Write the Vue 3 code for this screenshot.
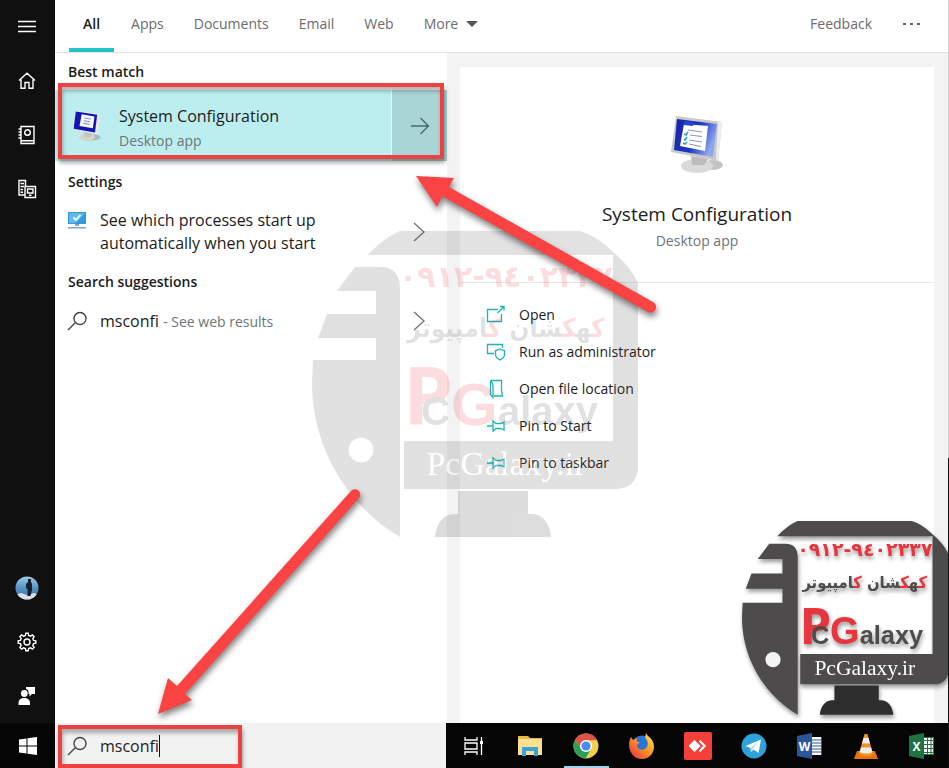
<script setup>
import { ref } from 'vue'

const query = ref('msconfi')
const activeTab = ref('All')

const tabs = ['All', 'Apps', 'Documents', 'Email', 'Web', 'More']

const actions = [
  { label: 'Open', icon: 'open' },
  { label: 'Run as administrator', icon: 'admin' },
  { label: 'Open file location', icon: 'folder' },
  { label: 'Pin to Start', icon: 'pin' },
  { label: 'Pin to taskbar', icon: 'pin' }
]

const marks = ['faded', 'solid']
</script>

<template>
  <div class="desktop">
    <div class="search-window">
      <nav class="rail">
        <button class="rail-button" aria-label="Menu">
          <svg width="20" height="20" viewBox="0 0 20 20">
            <path d="M1 4.5H19M1 9.5H19M1 14.5H19" />
          </svg>
        </button>
        <button class="rail-button" aria-label="Home">
          <svg width="20" height="20" viewBox="0 0 20 20">
            <path d="M2 9.6 10 2.2 18 9.6M4 8.5V17.3H8V11.5H12V17.3H16V8.5" />
          </svg>
        </button>
        <button class="rail-button" aria-label="Notebook">
          <svg width="20" height="20" viewBox="0 0 20 20">
            <path d="M4 1.5H17V18.5H4ZM4 15.8H17M1.5 4H4.5M1.5 7H4.5M1.5 10H4.5M1.5 13H4.5" />
            <circle cx="10.5" cy="7.5" r="2.8" />
          </svg>
        </button>
        <button class="rail-button" aria-label="Devices">
          <svg width="20" height="20" viewBox="0 0 20 20">
            <path d="M7.5 16H2V1.5H8.5V7M3.5 4.5H7M3.5 7.5H7M3.5 10.5H6M3.5 13.2H6M8 7.5H18.5V18.5H8ZM10.5 10H16V14H10.5ZM12 16.3H14.5" />
          </svg>
        </button>
        <span class="rail-space" />
        <button class="rail-button" aria-label="Account">
          <svg class="plain" width="24" height="24" viewBox="0 0 24 24">
            <defs>
              <linearGradient id="sky" x2="0" y2="1">
                <stop offset="0" stop-color="#9fd0ee" />
                <stop offset=".5" stop-color="#5592c4" />
                <stop offset="1" stop-color="#3c6d9c" />
              </linearGradient>
              <clipPath id="face"><circle cx="12" cy="12" r="11.5" /></clipPath>
            </defs>
            <g clip-path="url(#face)">
              <path fill="url(#sky)" d="M0 0H24V24H0Z" />
              <path fill="#d9dfe3" d="M0 19 6 17 12 19 19 17 24 19V24H0Z" />
              <path fill="#16202f" d="M13 3H16V6L17 8V14L15.5 20H12.5V13L11 12V8L13 6Z" />
            </g>
          </svg>
        </button>
        <button class="rail-button" aria-label="Settings">
          <svg width="20" height="20" viewBox="0 0 20 20">
            <path d="M8.4 3.4 8.8 1.2H11.2L11.6 3.4 13.5 4.2 15.4 2.9 17.1 4.6 15.8 6.5 16.6 8.4 18.8 8.8V11.2L16.6 11.6 15.8 13.5 17.1 15.4 15.4 17.1 13.5 15.8 11.6 16.6 11.2 18.8H8.8L8.4 16.6 6.5 15.8 4.6 17.1 2.9 15.4 4.2 13.5 3.4 11.6 1.2 11.2V8.8L3.4 8.4 4.2 6.5 2.9 4.6 4.6 2.9 6.5 4.2Z" />
            <circle cx="10" cy="10" r="3" />
          </svg>
        </button>
        <button class="rail-button" aria-label="Give feedback">
          <svg class="plain" width="20" height="20" viewBox="0 0 20 20">
            <path fill="#fff" d="M9 1H18V8H15L12.5 10.5V8H11.5C12 5 11 3.5 9 3Z" />
            <circle cx="7.3" cy="7.5" r="3.4" fill="#fff" />
            <path fill="#fff" d="M1.5 19V17C1.5 13.5 4 12 7.2 12S13 13.5 13 17V19Z" />
          </svg>
        </button>
      </nav>

      <div class="content">
        <header class="tabs">
          <button
            v-for="tab in tabs"
            :key="tab"
            class="tab"
            :class="{ active: tab === activeTab }"
            @click="activeTab = tab">
            {{ tab }}
            <svg v-if="tab === 'More'" width="12" height="6" viewBox="0 0 12 6">
              <path fill="#555" d="M0 0H12L6 6Z" />
            </svg>
          </button>
          <span class="tabs-space" />
          <button class="tab">Feedback</button>
          <button class="tab more" aria-label="Options">
            <svg width="18" height="4" viewBox="0 0 18 4">
              <path fill="#666" d="M0 1H3V3H0ZM7 1H10V3H7ZM14 1H17V3H14Z" />
            </svg>
          </button>
        </header>

        <main class="columns">
          <section class="results">
            <h2 class="group first">Best match</h2>
            <div class="best">
              <button class="best-main">
                <svg class="best-icon" width="30" height="32" viewBox="0 0 54 60">
                  <ellipse cx="36" cy="51" rx="16" ry="6" fill="#a9b8b8" />
                  <ellipse cx="27" cy="51" rx="15" ry="7" fill="#d7d3c8" />
                  <path fill="#c5c5c5" d="M20 40H37L34 51H22Z" />
                  <path fill="#e4e6ea" d="M6 1 52 8 48 46 1 37Z" />
                  <path fill="#1414b4" d="M6 3 46 9 42 42 2 35Z" />
                  <path fill="#f5f8ff" d="M17 8 41 12 38 34 13 30Z" />
                  <path fill="none" stroke="#8a9bb8" stroke-width="2" d="M22 15 34 17M21 20 33 22M20 25 32 27" />
                </svg>
                <span class="best-text">
                  <span class="best-title">System Configuration</span>
                  <span class="muted">Desktop app</span>
                </span>
              </button>
              <button class="best-open" aria-label="Show details">
                <svg width="20" height="18" viewBox="0 0 20 18">
                  <path fill="none" stroke="#45696c" stroke-width="1.3" d="M1 9H18.5M10.5 1 18.5 9 10.5 17" />
                </svg>
              </button>
            </div>

            <h2 class="group">Settings</h2>
            <button class="row tall">
              <svg class="row-icon" width="20" height="20" viewBox="0 0 20 20">
                <path fill="#3398dc" d="M1 2H19V14H1Z" />
                <path fill="#62b9ef" d="M2 3H18L9 13H2Z" />
                <path fill="none" stroke="#fff" stroke-width="1.8" d="M6.5 7.5 9 10 13.5 5" />
                <path fill="#7ba8c4" d="M8 14H12V16H8ZM1 17H19V18.5H1Z" />
              </svg>
              <span class="row-text">See which processes start up automatically when you start</span>
              <svg class="chevron" width="12" height="20" viewBox="0 0 12 20">
                <path d="M1 1 11 10 1 19" />
              </svg>
            </button>

            <h2 class="group">Search suggestions</h2>
            <button class="row">
              <svg class="row-icon" width="20" height="20" viewBox="0 0 20 20">
                <path class="glass" d="M1 19 8 12M13 13.5A6 6 0 1 0 13 1.5 6 6 0 0 0 13 13.5Z" />
              </svg>
              <span class="row-text">msconfi <span class="muted">- See web results</span></span>
              <svg class="chevron" width="12" height="20" viewBox="0 0 12 20">
                <path d="M1 1 11 10 1 19" />
              </svg>
            </button>
          </section>

          <section class="preview">
            <div class="card">
              <div class="summary">
                <svg width="54" height="60" viewBox="0 0 54 60">
                  <defs>
                    <linearGradient id="screen" y2=".4">
                      <stop offset="0" stop-color="#1420a8" />
                      <stop offset=".6" stop-color="#2038c8" />
                      <stop offset="1" stop-color="#8ea8ee" />
                    </linearGradient>
                  </defs>
                  <ellipse cx="43" cy="50" rx="10" ry="5" fill="#c4c4c4" />
                  <ellipse cx="27" cy="51" rx="16" ry="7" fill="#dadada" />
                  <path fill="#bcbcbc" d="M21 41 38 44 34 50H22Z" />
                  <path fill="#c9c9c9" d="M6 1 52 7 48 46 1 37Z" />
                  <path fill="#ededed" d="M48 7 52 7 48 46 46 44Z" />
                  <path fill="url(#screen)" d="M7 4 47 9 43 42 4 35Z" />
                  <path fill="#fff" d="M14 9 38 11 35 36 10 31Z" />
                  <path fill="#2840d0" d="M14 6 24 7 23 11 14 10Z" />
                  <path fill="none" stroke="#8d99b0" stroke-width="1" d="M18 15 32 17M20 20 32 21.5M19 25 32 27M19 29 31 31.5" />
                  <path fill="none" stroke="#2c9cc4" stroke-width="1.5" d="M14 19 16 20 18 17M14 24 15 25 17 22M13 28 15 29 17 27" />
                </svg>
                <h1 class="title">System Configuration</h1>
                <span class="muted">Desktop app</span>
              </div>
              <div class="actions">
                <button v-for="action in actions" :key="action.label" class="action">
                  <svg width="20" height="20" viewBox="0 0 20 20">
                    <path v-if="action.icon === 'open'" d="M12 4.5H1.5V16.5H15.5V9M11.5 8 18 1.5M14 1.5H18V5.5" />
                    <path v-else-if="action.icon === 'admin'" d="M8 11.5H1.5V2.5H16.5V6M14 7 18.5 8.8V12.5C18.5 15.5 16 17 14 18 12 17 9.5 15.5 9.5 12.5V8.8Z" />
                    <path v-else-if="action.icon === 'folder'" d="M4.5 1.5H15.5V11L16.5 17H8M4.5 1.5V16L7 18.5V7C7 4.5 5.5 3.5 4.5 1.5Z" />
                    <path v-else d="M1 10H7M7 5V15L10 12.5H15L18 14V6L15 7.5H10Z" />
                  </svg>
                  {{ action.label }}
                </button>
              </div>
            </div>
          </section>
        </main>
      </div>
    </div>

    <footer class="taskbar">
      <button class="start" aria-label="Start">
        <svg width="20" height="20" viewBox="0 0 20 20">
          <path fill="#fff" d="M1 3.5 8.5 2.4V9.4H1ZM9.5 2.2 19 1V9.4H9.5ZM1 10.5H8.5V17.6L1 16.5ZM9.5 10.5H19V19L9.5 17.8Z" />
        </svg>
      </button>
      <label class="search-box">
        <svg class="row-icon" width="20" height="20" viewBox="0 0 20 20">
          <path class="glass" d="M1 19 8 12M13 13.5A6 6 0 1 0 13 1.5 6 6 0 0 0 13 13.5Z" />
        </svg>
        <input v-model="query" type="text" aria-label="Search">
        <span class="caret" />
      </label>
      <div class="apps">
        <button class="app" aria-label="Task View">
          <svg width="22" height="20" viewBox="0 0 22 20">
            <path fill="none" stroke="#fff" stroke-width="1.3" d="M2 1V4H14V1M2 19V16H14V19M2 7H14V13H2ZM18.5 1V19" />
            <path fill="#fff" d="M17 5H20V8H17Z" />
          </svg>
        </button>
        <button class="app" aria-label="File Explorer">
          <svg width="26" height="26" viewBox="0 0 26 26">
            <path fill="#e9b949" d="M1 3H11L13 5H25V22H1Z" />
            <path fill="#fae08f" d="M1 6H25V22H1Z" />
            <path fill="#38a4d8" d="M5 14H21V23H17V18H9V23H5Z" />
          </svg>
        </button>
        <button class="app running" aria-label="Chrome">
          <svg width="26" height="26" viewBox="0 0 26 26">
            <circle cx="13" cy="13" r="12.5" fill="#f6cf4a" />
            <path fill="#dc5445" d="M2.2 6.7A12.5 12.5 0 0 1 24 7.2H13L7.8 16Z" />
            <path fill="#2c9f5b" d="M2.2 6.7A12.5 12.5 0 0 0 12.5 25.5L18.2 15.8 7.8 16Z" />
            <circle cx="13" cy="13" r="6" fill="#fff" />
            <circle cx="13" cy="13" r="4.6" fill="#4b8bf0" />
          </svg>
        </button>
        <button class="app" aria-label="Firefox">
          <svg width="28" height="28" viewBox="0 0 28 28">
            <defs>
              <linearGradient id="fox" x1="1" x2="0" y2="1">
                <stop offset="0" stop-color="#fff04a" />
                <stop offset=".45" stop-color="#ff9a22" />
                <stop offset="1" stop-color="#e8264c" />
              </linearGradient>
            </defs>
            <circle cx="14" cy="14" r="10.5" fill="#2a73d8" />
            <path fill="url(#fox)" d="M3 5 5 8 9 6C8 9 9 10 12 10L9 13C9 18 15 19 18 16 21 13 20 8 17 6L18 1C19 4 22 5 24 8 29 16 24 27 14 27 3 27-2 14 3 5Z" />
          </svg>
        </button>
        <button class="app" aria-label="AnyDesk">
          <svg width="28" height="28" viewBox="0 0 28 28">
            <rect width="28" height="28" rx="2" fill="#f5403a" />
            <path fill="#fff" d="M10.5 8 16.5 14 10.5 20 4.5 14Z" />
            <path fill="none" stroke="#fff" stroke-width="2.2" d="M15.5 8.8 20.7 14 15.5 19.2" />
          </svg>
        </button>
        <button class="app" aria-label="Telegram">
          <svg width="26" height="26" viewBox="0 0 26 26">
            <circle cx="13" cy="13" r="12.5" fill="#2ea2dc" />
            <path fill="#fff" d="M4.5 13 20 6.5 17.5 20 12.5 16.5 10 19 9.5 15Z" />
            <path fill="#b8d7ea" d="M9.5 15 17 9 11.5 16 10 19Z" />
          </svg>
        </button>
        <button class="app" aria-label="Word">
          <svg width="26" height="26" viewBox="0 0 26 26">
            <path fill="#fff" d="M14 4H25V22H14Z" />
            <path fill="none" stroke="#2b579a" d="M15 7H24M15 10H24M15 13H24M15 16H24M15 19H24M24.5 4V22" />
            <path fill="#2b579a" d="M0 3 15 0V26L0 23Z" />
            <text x="7.5" y="18" class="office">W</text>
          </svg>
        </button>
        <button class="app" aria-label="VLC">
          <svg width="26" height="26" viewBox="0 0 26 26">
            <path fill="#e8740c" d="M4 18H22L25 26H1Z" />
            <path fill="#f59322" d="M11.5 1H14.5L20 21C17 24 9 24 6 21Z" />
            <path fill="#eee" d="M10.5 5H15.5L17 10.5H9ZM8 14.5H18L19.5 19C16 21 10 21 6.5 19Z" />
          </svg>
        </button>
        <button class="app" aria-label="Excel">
          <svg width="26" height="26" viewBox="0 0 26 26">
            <path fill="#fff" d="M14 4H25V22H14Z" />
            <path fill="none" stroke="#217346" d="M15 7.5H25M15 11.5H25M15 15.5H25M15 19.5H25M18.5 5V21M22 5V21M24.5 4V22M14 4.5H25M14 21.5H25" />
            <path fill="#1e7344" d="M0 3 15 0V26L0 23Z" />
            <text x="7.5" y="18" class="office">X</text>
          </svg>
        </button>
      </div>
    </footer>

    <!-- shop logo: large faded copy and small solid one -->
    <svg
      v-for="mark in marks"
      :key="mark"
      class="logo"
      :class="mark"
      viewBox="0 0 327 308">
      <path class="frame" d="M56 24C65 14 76 5 88 0H268C281 4 292 12 301 21 312 30 321 41 326 52V236C326 250 317 258 303 258H92V210H301V24Z" />
      <path class="frame" d="M43 36H68C81 36 88 43 88 57V306C38 277 0 219 0 152L1 129H64V107H6L15 83H64V60H25Z" />
      <circle class="hole" cx="49" cy="219" r="12" />
      <path class="stand" d="M146 260H216V283H221C232 284 238 294 239 306H123C124 294 130 284 141 283H146Z" />
      <text class="phone" x="194" y="56">٠٩١٢-٩٤٠٢٣٣٧</text>
      <text class="persian" x="194" y="106"><tspan class="red">ک</tspan>ه<tspan class="red">ک</tspan>شان <tspan class="red">ک</tspan>امپیوتر</text>
      <text class="big-p red" x="91" y="194">P</text>
      <text class="big-c" x="109" y="194">C</text>
      <text class="big-g red" x="139" y="194">G</text>
      <text class="alaxy" x="186" y="194">alaxy</text>
      <text class="site" x="194" y="244">PcGalaxy.ir</text>
    </svg>

    <span class="edge" />
    <span class="highlight result-highlight" />
    <span class="highlight query-highlight" />

    <svg class="arrow to-result" width="250" height="146" viewBox="0 0 250 146">
      <path d="M6 6 44 8 39 17 243 132A5 5 0 0 1 238 142L32 26 27 37Z" />
    </svg>
    <svg class="arrow to-query" width="214" height="236" viewBox="0 0 214 236">
      <path d="M6 230 16 194 25 202 199 7A5 5 0 0 1 207 14L33 210 40 216Z" />
    </svg>
  </div>
</template>

<style>
body {
  margin: 0;
}
</style>

<style scoped>
.desktop {
  position: relative;
  display: flex;
  flex-direction: column;
  min-height: 100vh;
  overflow: hidden;
  background: #fff;
  color: #1c1c1c;
  font-family: "Open Sans", "Noto Sans", sans-serif;
  font-size: 14px;
}

button {
  padding: 0;
  border: 0;
  background: none;
  color: inherit;
  font: inherit;
  text-align: left;
  cursor: pointer;
}

svg {
  display: block;
  flex: none;
}

.search-window {
  display: flex;
  flex: 1;
}

.rail {
  display: flex;
  flex-direction: column;
  width: 54px;
  border-right: 1px solid #101010;
  background: #101010;
}

.rail-button {
  display: flex;
  align-items: center;
  justify-content: center;
  height: 54px;
}

.rail-button svg:not(.plain) {
  fill: none;
  stroke: #fff;
  stroke-width: 1.4;
}

.rail-space {
  flex: 1;
}

.content {
  display: flex;
  flex: 1;
  flex-direction: column;
  min-width: 0;
}

.tabs {
  display: flex;
  height: 52px;
  padding-left: 14px;
  border-bottom: 1px solid #e4e4e4;
}

.tab {
  display: flex;
  align-items: center;
  gap: 8px;
  padding: 0 15px 2px;
  border-top: 1px solid transparent;
  border-bottom: 4px solid transparent;
  color: #6c6c6c;
  line-height: 20px;
}

.tab.active {
  margin-right: 2px;
  padding: 0 14px 2px;
  border-bottom-color: #23c4c4;
  color: #1c1c1c;
  font-weight: 600;
}

.tab.more {
  padding: 0 28px 2px 16px;
}

.tabs-space {
  flex: 1;
}

.columns {
  display: flex;
  flex: 1;
}

.results {
  width: 392px;
}

.group {
  display: flex;
  align-items: center;
  height: 41px;
  margin: 0;
  padding-left: 13px;
  font-size: 14px;
  font-weight: 600;
}

.group.first {
  height: 37px;
}

.best {
  display: flex;
  height: 71px;
  background: #bdeeef;
}

.best-main {
  display: flex;
  flex: 1;
  align-items: center;
  gap: 17px;
  padding-left: 17px;
  border-right: 1px solid #eefafa;
}

.best-text {
  display: flex;
  flex-direction: column;
  gap: 4px;
  padding-top: 5px;
}

.best-title {
  font-size: 16px;
  line-height: 22px;
}

.muted {
  color: #6c7577;
  font-size: 14px;
  line-height: 20px;
}

.best-open {
  display: flex;
  align-items: center;
  justify-content: center;
  width: 55px;
  background: #aad5d6;
}

.row {
  display: flex;
  align-items: center;
  width: 100%;
  height: 38px;
  padding: 0 22px 0 12px;
  font-size: 16px;
  line-height: 23px;
}

.row.tall {
  height: 59px;
}

.row.tall .row-icon {
  align-self: flex-start;
  margin-top: 8px;
}

.row-icon {
  margin-right: 13px;
}

.row-text {
  flex: 1;
  padding-right: 80px;
}

.glass,
.chevron {
  fill: none;
  stroke: #444;
  stroke-width: 1.4;
}

.chevron {
  stroke: #777;
}

.preview {
  display: flex;
  flex: 1;
  padding: 14px 15px 0 13px;
  background: #f3f3f3;
}

.card {
  flex: 1;
  background: #fff;
}

.summary {
  display: flex;
  flex-direction: column;
  align-items: center;
  height: 167px;
  padding-top: 48px;
  border-bottom: 1px solid #e8e8e8;
}

.title {
  margin: 25px 0 3px;
  font-size: 19px;
  font-weight: 400;
  line-height: 28px;
}

.actions {
  padding: 13px 0 0 26px;
}

.action {
  display: flex;
  align-items: center;
  gap: 13px;
  width: 100%;
  height: 37px;
}

.action svg {
  fill: none;
  stroke: #1fb5b8;
  stroke-width: 1.3;
}

.taskbar {
  display: flex;
  height: 45px;
  background: #050505;
}

.start {
  display: flex;
  flex: none;
  align-items: center;
  justify-content: center;
  width: 55px;
}

.search-box {
  display: flex;
  flex: none;
  align-items: center;
  box-sizing: border-box;
  width: 391px;
  padding: 1px 0 0 12px;
  background: #f2f2f2;
}

.search-box input {
  padding: 0;
  border: 0;
  outline: 0;
  background: none;
  color: #222;
  font: inherit;
  font-size: 16px;
  field-sizing: content;
}

.caret {
  width: 1px;
  height: 22px;
  background: #111;
}

.apps {
  display: flex;
  flex: 1;
  min-width: 0;
}

.app {
  display: flex;
  flex: none;
  align-items: center;
  justify-content: center;
  box-sizing: border-box;
  width: 56px;
}

.app.running {
  background: linear-gradient(#9ed5e8, #9ed5e8) center bottom / 45px 2px no-repeat;
}

.office {
  fill: #fff;
  font-size: 12px;
  font-weight: 700;
  text-anchor: middle;
}

.logo {
  position: absolute;
  overflow: visible;
  pointer-events: none;
}

.logo.faded {
  top: 231px;
  left: 312px;
  width: 327px;
  height: 308px;
  opacity: 0.16;
}

.logo.solid {
  top: 521px;
  left: 742px;
  width: 207px;
  height: 195px;
  filter: drop-shadow(1px 3px 2px rgba(0, 0, 0, 0.4));
}

.frame {
  fill: #4d4b4c;
}

.hole {
  fill: #f4f4f4;
}

.faded .hole {
  fill: #fff;
  stroke: #fff;
}

.stand {
  fill: #2e2e2e;
}

.phone,
.persian,
.big-c,
.alaxy {
  fill: #4d4b4c;
}

.logo .phone,
.logo .red {
  fill: #e8343e;
}

.phone {
  font-family: "DejaVu Sans", sans-serif;
  font-size: 30px;
  font-weight: 700;
  text-anchor: middle;
  direction: ltr;
  unicode-bidi: bidi-override;
}

.persian {
  font-family: "DejaVu Sans Condensed", "DejaVu Sans", sans-serif;
  font-size: 26px;
  font-weight: 700;
  text-anchor: middle;
  direction: rtl;
}

.big-p,
.big-c,
.big-g,
.alaxy {
  font-family: "Liberation Sans", sans-serif;
  font-weight: 700;
}

.big-p {
  font-family: "Open Sans", sans-serif;
  font-size: 80px;
}

.big-c {
  font-size: 40px;
}

.big-g {
  font-size: 60px;
}

.alaxy {
  font-size: 40px;
}

.site {
  fill: #fff;
  font-family: "Liberation Serif", serif;
  font-size: 34px;
  text-anchor: middle;
}

.edge {
  position: absolute;
  top: 0;
  right: 0;
  bottom: 0;
  width: 1px;
  background: linear-gradient(#d4d4d4 458px, #111 458px);
}

.highlight {
  position: absolute;
  box-sizing: border-box;
  border: 4px solid #ee4242;
  box-shadow: 1px 4px 4px rgba(0, 0, 0, 0.35), inset 1px 4px 4px rgba(0, 0, 0, 0.3);
  pointer-events: none;
}

.result-highlight {
  top: 83px;
  left: 58px;
  width: 386px;
  height: 76px;
}

.query-highlight {
  top: 725px;
  left: 58px;
  width: 184px;
  height: 43px;
}

.arrow {
  position: absolute;
  overflow: visible;
  fill: #fb4343;
  filter: drop-shadow(1px 4px 3px rgba(0, 0, 0, 0.5));
  pointer-events: none;
}

.to-result {
  top: 170px;
  left: 410px;
}

.to-query {
  top: 484px;
  left: 152px;
}
</style>
